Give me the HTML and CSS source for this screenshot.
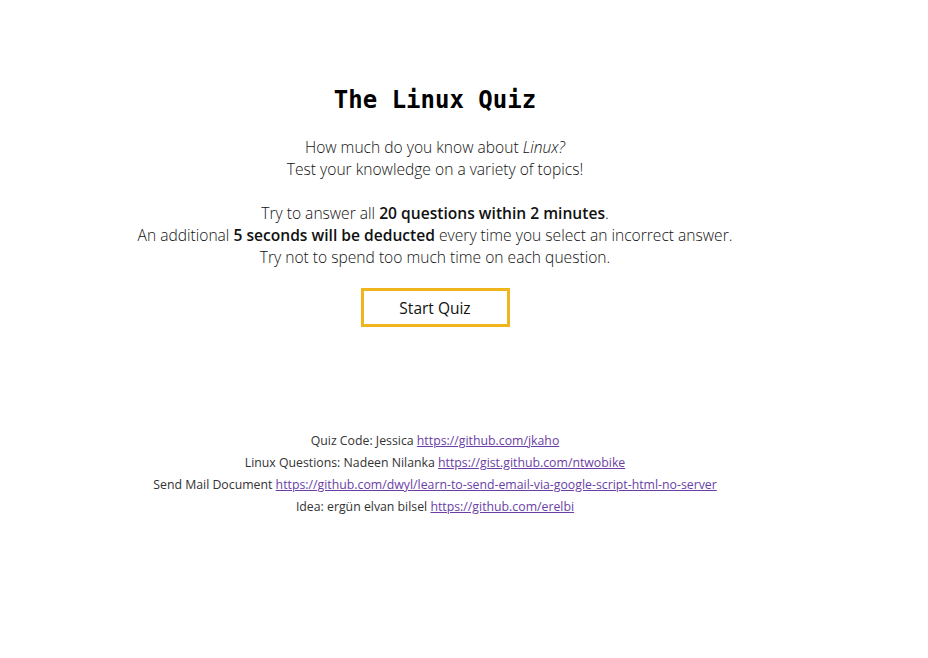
FILE: index.html
```html
<!DOCTYPE html>
<html>
<head>
<meta charset="utf-8">
<link rel="stylesheet" href="styles.css">
</head>
<body>
<main class="page">
  <section class="intro">
    <h1 class="title">The Linux Quiz</h1>
    <p class="text">How much do you know about <em>Linux?</em><br>Test your knowledge on a variety of topics!</p>
    <p class="text">Try to answer all <strong>20 questions within 2 minutes</strong>.<br>An additional <strong>5 seconds will be deducted</strong> every time you select an incorrect answer.<br>Try not to spend too much time on each question.</p>
    <button class="start">Start Quiz</button>
  </section>
  <footer class="credits">
    <p>Quiz Code: Jessica <a href="#">https://github.com/jkaho</a></p>
    <p>Linux Questions: Nadeen Nilanka <a href="#">https://gist.github.com/ntwobike</a></p>
    <p>Send Mail Document <a href="#">https://github.com/dwyl/learn-to-send-email-via-google-script-html-no-server</a></p>
    <p>Idea: ergün elvan bilsel <a href="#">https://github.com/erelbi</a></p>
  </footer>
</main>
</body>
</html>
```
FILE: styles.css
```css
html, body {
  margin: 0;
  padding: 0;
  background: #fff;
}
body {
  font-family: "Open Sans", "Noto Sans", sans-serif;
  color: #111;
}
.page {
  width: 870px;
  text-align: center;
}
.intro {
  padding-top: 83px;
}
.title {
  margin: 0 0 19px;
  font-family: "DejaVu Sans Mono", "Liberation Mono", monospace;
  font-size: 24px;
  font-weight: bold;
  line-height: 34px;
  color: #000;
}
.text {
  margin: 0 0 22px;
  font-size: 15.6px;
  line-height: 22px;
  font-weight: 300;
}
.text strong {
  font-weight: 600;
}
.start {
  margin-top: -2px;
  width: 149px;
  height: 39px;
  background: #fff;
  border: 3px solid #f0b41c;
  font-family: "Open Sans", "Noto Sans", sans-serif;
  font-size: 15.5px;
  color: #111;
  cursor: pointer;
}
.credits {
  margin-top: 103px;
  font-size: 12.3px;
  line-height: 22px;
  color: #333;
}
.credits p {
  margin: 0;
}
.credits a {
  color: #6a3ea5;
}
```
